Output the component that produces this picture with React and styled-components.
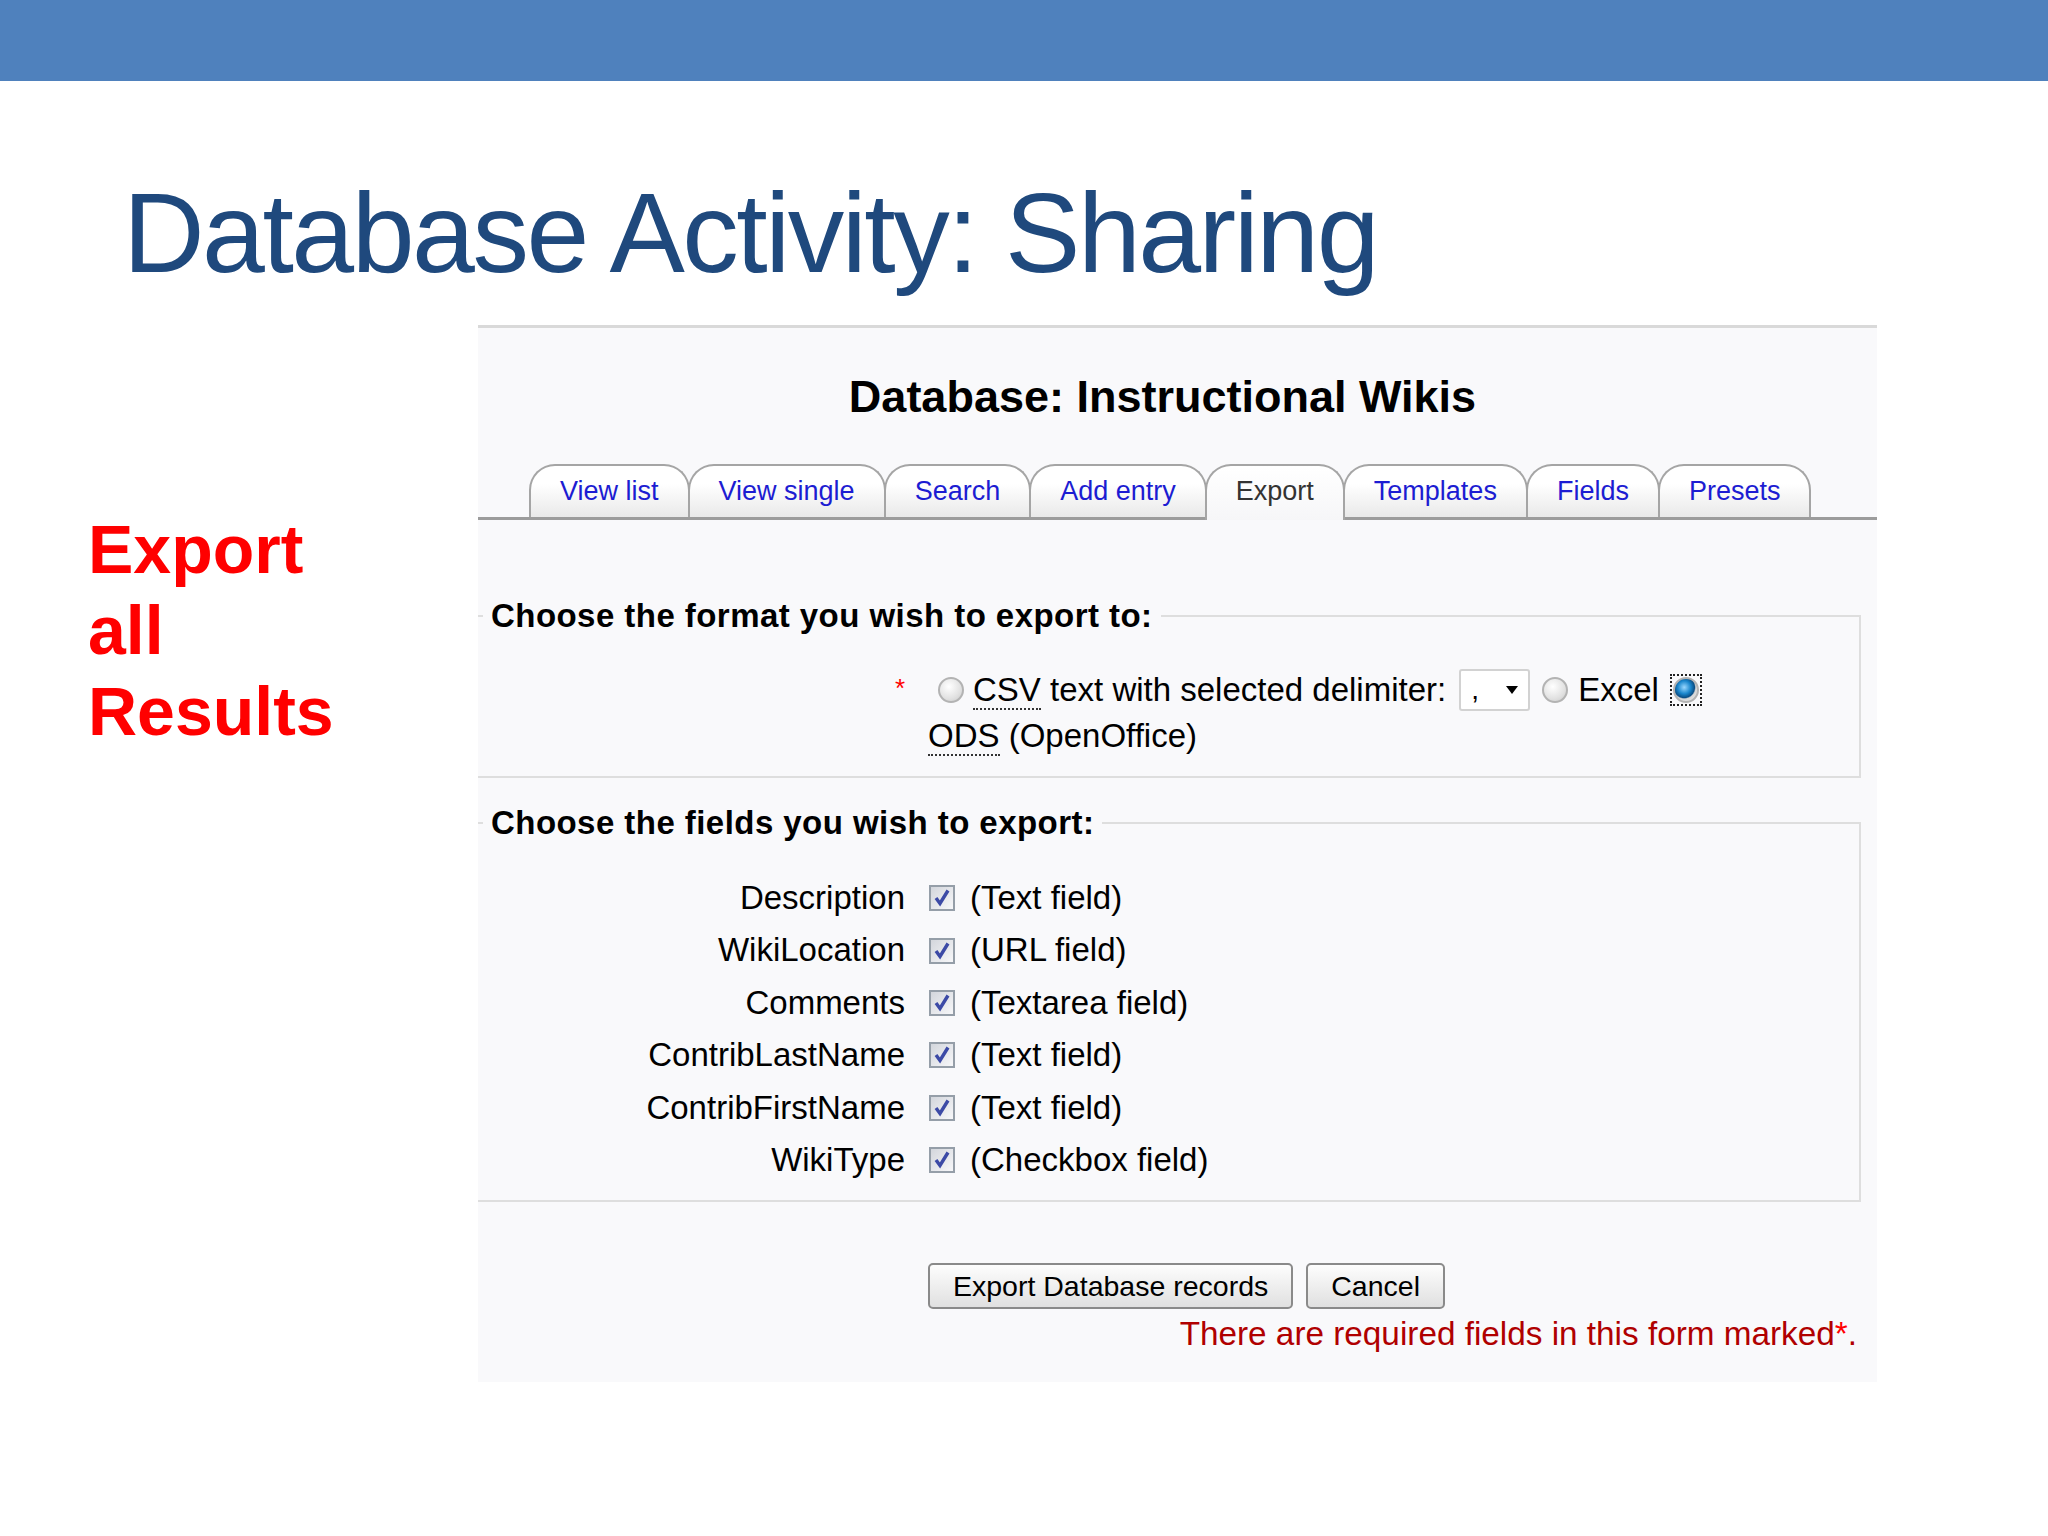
import React from 'react';
import styled, { createGlobalStyle } from 'styled-components';

const tabs = [
  { label: 'View list' },
  { label: 'View single' },
  { label: 'Search' },
  { label: 'Add entry' },
  { label: 'Export', active: true },
  { label: 'Templates' },
  { label: 'Fields' },
  { label: 'Presets' },
];

const fields = [
  ['Description', '(Text field)'],
  ['WikiLocation', '(URL field)'],
  ['Comments', '(Textarea field)'],
  ['ContribLastName', '(Text field)'],
  ['ContribFirstName', '(Text field)'],
  ['WikiType', '(Checkbox field)'],
];

const App = () => {
  return (
    <Slide>
      <GlobalStyle />
      <TopBar />
      <Title>Database Activity: Sharing</Title>
      <Body>
        <Aside>
          Export
          <br />
          all
          <br />
          Results
        </Aside>
        <Panel>
          <Heading>Database: Instructional Wikis</Heading>
          <TabRow>
            {tabs.map(t => (
              <Tab key={t.label} $active={t.active}>
                {t.label}
              </Tab>
            ))}
          </TabRow>

          <Fieldset $top={76} $bottom={17}>
            <Legend>Choose the format you wish to export to:</Legend>
            <FormGrid $top={31}>
              <LabelCell>
                <Required>*</Required>
              </LabelCell>
              <div>
                <OptionLine>
                  <Radio $left={10} />
                  <Text $left={9}>
                    <Abbr>CSV</Abbr> text with selected delimiter:
                  </Text>
                  <Select>
                    <span>,</span>
                    <Arrow />
                  </Select>
                  <Radio $left={12} />
                  <Text $left={10}>Excel</Text>
                  <Focus>
                    <Radio $checked />
                  </Focus>
                </OptionLine>
                <OptionLine>
                  <Text>
                    <Abbr>ODS</Abbr> (OpenOffice)
                  </Text>
                </OptionLine>
              </div>
            </FormGrid>
          </Fieldset>

          <Fieldset $top={25} $bottom={14}>
            <Legend>Choose the fields you wish to export:</Legend>
            <FieldList>
              {fields.map(([name, type]) => (
                <FieldRow key={name}>
                  <LabelCell>{name}</LabelCell>
                  <FieldValue>
                    <Checkbox>
                      <svg width="22" height="22" viewBox="0 0 22 22">
                        <path d="M5 11 L9 16.5 L17 3.5" fill="none" stroke="#3c4aa6" strokeWidth="3.4" />
                      </svg>
                    </Checkbox>
                    {type}
                  </FieldValue>
                </FieldRow>
              ))}
            </FieldList>
          </Fieldset>

          <Buttons>
            <Button>Export Database records</Button>
            <Button>Cancel</Button>
          </Buttons>
          <Note>
            There are required fields in this form marked<Star>*</Star>.
          </Note>
        </Panel>
      </Body>
    </Slide>
  );
};

export default App;

const GlobalStyle = createGlobalStyle`
  html, body {
    margin: 0;
    padding: 0;
    background: #ffffff;
  }
  body {
    font-family: "Liberation Sans", Arial, sans-serif;
  }
`;

const Slide = styled.div`
  width: 2048px;
  height: 1536px;
  overflow: hidden;
  background: #ffffff;
`;

const TopBar = styled.div`
  height: 81px;
  background: #4f81bd;
`;

const Title = styled.h1`
  margin: 96px 0 0 123px;
  font-size: 113px;
  line-height: 113px;
  font-weight: 400;
  letter-spacing: -2.5px;
  color: #1f497d;
`;

const Body = styled.div`
  display: flex;
  align-items: flex-start;
  margin-top: 35px;
`;

const Aside = styled.div`
  width: 478px;
  box-sizing: border-box;
  padding: 184px 0 0 88px;
  color: #ff0000;
  font-size: 68px;
  line-height: 81px;
  font-weight: 700;
`;

const Panel = styled.div`
  width: 1399px;
  box-sizing: border-box;
  background: #f9f9fb;
  border-top: 3px solid #d9d9d9;
  padding: 42px 0 28px;
  color: #000;
`;

const Heading = styled.h2`
  margin: 0;
  padding-right: 30px;
  text-align: center;
  font-size: 45px;
  line-height: 54px;
  font-weight: 700;
`;

const TabRow = styled.div`
  display: flex;
  align-items: flex-end;
  height: 53px;
  margin-top: 40px;
  padding-left: 51px;
  border-bottom: 3px solid #9c9c9c;
`;

const Tab = styled.div`
  position: relative;
  z-index: ${p => (p.$active ? 1 : 0)};
  box-sizing: border-box;
  height: ${p => (p.$active ? 56 : 53)}px;
  margin: 0 -2px ${p => (p.$active ? -3 : 0)}px 0;
  padding: 0 29px;
  border: 2px solid #a5a5a5;
  border-bottom: none;
  border-radius: 26px 26px 0 0;
  background: ${p => (p.$active ? 'linear-gradient(#ffffff, #f6f6f8)' : 'linear-gradient(#ffffff 35%, #e9e9e9)')};
  color: ${p => (p.$active ? '#333333' : '#1c1cd2')};
  font-size: 27px;
  line-height: 51px;
  white-space: nowrap;
`;

const Fieldset = styled.fieldset`
  margin: ${p => p.$top}px 16px 0 0;
  padding: 0 0 ${p => p.$bottom}px;
  min-width: 0;
  border: 2px solid #dedede;
  border-left: none;
`;

const Legend = styled.legend`
  margin-left: 5px;
  padding: 0 8px;
  font-size: 33px;
  line-height: 40px;
  font-weight: 700;
  letter-spacing: 0.45px;
`;

const FormGrid = styled.div`
  display: grid;
  grid-template-columns: 427px 1fr;
  column-gap: 23px;
  margin-top: ${p => p.$top}px;
  font-size: 33px;
`;

const LabelCell = styled.div`
  text-align: right;
  white-space: nowrap;
`;

const Required = styled.span`
  display: inline-block;
  color: #ff0000;
  font-size: 26px;
  line-height: 30px;
  margin-top: 4px;
`;

const OptionLine = styled.div`
  display: flex;
  align-items: center;
  height: 46px;
  line-height: 46px;
  white-space: nowrap;
`;

const Text = styled.span`
  margin-left: ${p => p.$left || 0}px;
`;

const Abbr = styled.span`
  border-bottom: 2px dotted #333;
  line-height: 1;
`;

const Radio = styled.span`
  flex: none;
  display: block;
  box-sizing: border-box;
  width: 26px;
  height: 26px;
  margin-left: ${p => p.$left || 0}px;
  border-radius: 50%;
  border: 2px solid #b3b3b3;
  background: ${p =>
    p.$checked
      ? 'radial-gradient(circle at 42% 38%, #9ad8ff 0, #1a86cc 35%, #0b4f86 55%, #d6d6d6 62%, #f3f3f3 100%)'
      : 'radial-gradient(circle at 40% 35%, #ffffff 0, #e2e2e2 60%, #c8c8c8 100%)'};
`;

const Focus = styled.span`
  flex: none;
  display: block;
  margin-left: 11px;
  padding: 1px;
  border: 2px dotted #222;
`;

const Select = styled.span`
  flex: none;
  display: flex;
  align-items: center;
  justify-content: space-between;
  box-sizing: border-box;
  width: 71px;
  height: 42px;
  margin-left: 13px;
  padding: 0 10px 0 10px;
  background: #ffffff;
  border: 2px solid #d2d2d2;
  border-radius: 3px;
  font-size: 28px;
`;

const Arrow = styled.span`
  width: 0;
  height: 0;
  border-left: 6px solid transparent;
  border-right: 6px solid transparent;
  border-top: 8px solid #000;
`;

const FieldList = styled.div`
  margin-top: 29px;
  font-size: 33px;
`;

const FieldRow = styled.div`
  display: grid;
  grid-template-columns: 427px 1fr;
  column-gap: 24px;
  height: 52.4px;
  line-height: 52.4px;
`;

const FieldValue = styled.div`
  display: flex;
  align-items: center;
  white-space: nowrap;
`;

const Checkbox = styled.span`
  flex: none;
  display: flex;
  align-items: center;
  justify-content: center;
  box-sizing: border-box;
  width: 26px;
  height: 26px;
  margin-right: 15px;
  border: 2px solid #959ea8;
  background: linear-gradient(135deg, #d3d6dc, #f7f7f9);
`;

const Buttons = styled.div`
  display: flex;
  gap: 13px;
  margin-top: 61px;
  padding-left: 450px;
`;

const Button = styled.button`
  box-sizing: border-box;
  height: 46px;
  padding: 0 23px;
  border: 2px solid #8a8a8a;
  border-radius: 5px;
  background: linear-gradient(#fdfdfd, #e0e0e0);
  color: #000;
  font-family: "Liberation Sans", Arial, sans-serif;
  font-size: 28.5px;
`;

const Note = styled.div`
  margin-top: 5px;
  padding-right: 20px;
  text-align: right;
  color: #b00000;
  font-size: 33.3px;
  line-height: 40px;
`;

const Star = styled.span`
  color: #ff0000;
`;
